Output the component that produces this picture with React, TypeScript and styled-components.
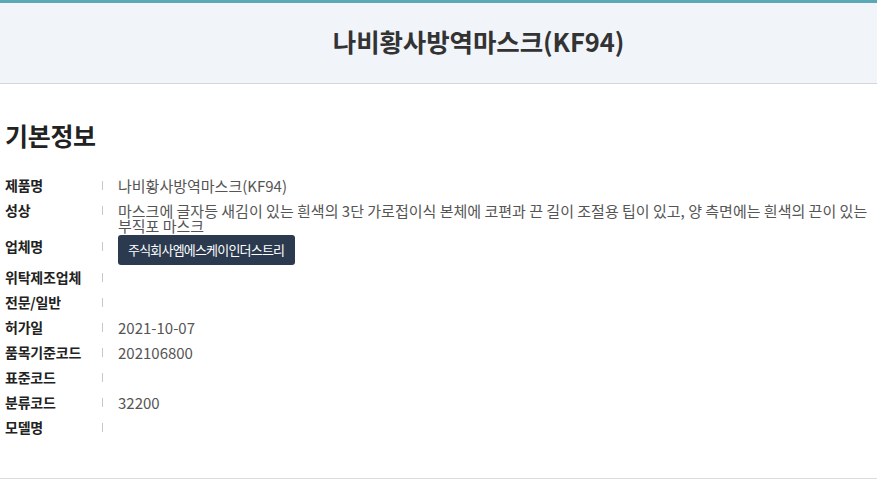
import React from "react";
import styled, { createGlobalStyle } from "styled-components";

const Global = createGlobalStyle`
  html, body { margin: 0; padding: 0; background: #fff; }
  body { font-family: "Noto Sans CJK KR", "Noto Sans", sans-serif; }
  * { box-sizing: border-box; }
`;

const Page = styled.div`
  width: 877px;
  border-bottom: 1px solid #dcdcdc;
`;

const Header = styled.header`
  height: 84px;
  background: #f1f5fa;
  border-top: 3px solid #5aa8b6;
  border-bottom: 1px solid #d6d6d6;
  display: flex;
  align-items: center;
  justify-content: center;
  padding: 0 0 4px 80px;
`;

const Title = styled.h1`
  margin: 0;
  font-size: 25.5px;
  font-weight: 700;
  color: #333;
  line-height: 1;
  letter-spacing: -0.1px;
`;

const Section = styled.section`
  padding: 33px 5px 38px 5px;
`;

const Heading = styled.h2`
  margin: 0 0 20px 0;
  font-size: 25px;
  font-weight: 700;
  color: #222;
  line-height: 36px;
  letter-spacing: -0.3px;
`;

const List = styled.dl`
  margin: 0;
  display: flex;
  flex-direction: column;
`;

const Row = styled.div`
  display: flex;
  align-items: flex-start;
  min-height: 25px;
`;

const Label = styled.dt`
  position: relative;
  width: 98px;
  flex: none;
  font-size: 14px;
  font-weight: 700;
  color: #222;
  line-height: 25px;
  letter-spacing: -0.2px;
  &::after {
    content: "";
    position: absolute;
    right: 0;
    top: 8px;
    width: 1px;
    height: 9px;
    background: #c8c8c8;
  }
`;

const Value = styled.dd`
  margin: 0 0 0 15px;
  flex: 1;
  font-size: 15px;
  color: #555;
  line-height: 15.5px;
  padding-top: 4.75px;
  word-break: keep-all;
`;

const ButtonCell = styled.dd`
  margin: 0 0 0 15px;
  flex: 1;
  padding-top: 1px;
`;

const CompanyButton = styled.button`
  height: 30px;
  padding: 0 11px 0 10px;
  border: none;
  border-radius: 3px;
  background: #2b3a4e;
  color: #fff;
  font-family: "Noto Sans CJK KR", "Noto Sans", sans-serif;
  font-size: 13px;
  letter-spacing: -0.8px;
  cursor: pointer;
`;

const rows: { label: string; value?: string; button?: string }[] = [
  { label: "제품명", value: "나비황사방역마스크(KF94)" },
  {
    label: "성상",
    value:
      "마스크에 글자등 새김이 있는 흰색의 3단 가로접이식 본체에 코편과 끈 길이 조절용 팁이 있고, 양 측면에는 흰색의 끈이 있는 부직포 마스크",
  },
  { label: "업체명", button: "주식회사엠에스케이인더스트리" },
  { label: "위탁제조업체", value: "" },
  { label: "전문/일반", value: "" },
  { label: "허가일", value: "2021-10-07" },
  { label: "품목기준코드", value: "202106800" },
  { label: "표준코드", value: "" },
  { label: "분류코드", value: "32200" },
  { label: "모델명", value: "" },
];

export default function App() {
  return (
    <>
      <Global />
      <Page>
        <Header>
          <Title>나비황사방역마스크(KF94)</Title>
        </Header>
        <Section>
          <Heading>기본정보</Heading>
          <List>
            {rows.map((r) => (
              <Row key={r.label}>
                <Label>{r.label}</Label>
                {r.button ? (
                  <ButtonCell>
                    <CompanyButton>{r.button}</CompanyButton>
                  </ButtonCell>
                ) : (
                  <Value>{r.value}</Value>
                )}
              </Row>
            ))}
          </List>
        </Section>
      </Page>
    </>
  );
}
